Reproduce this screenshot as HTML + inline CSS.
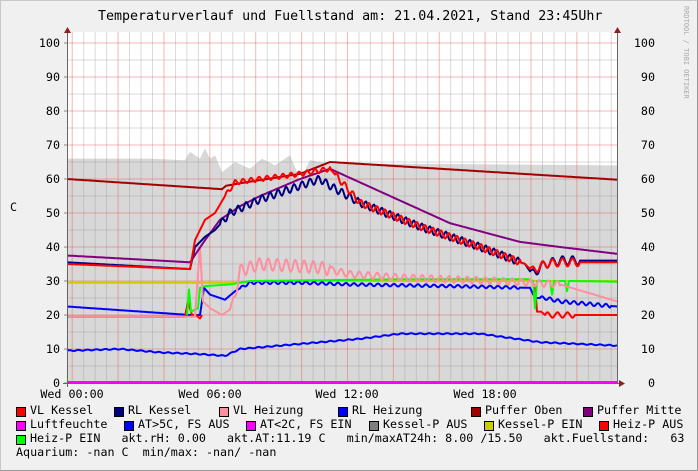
<!DOCTYPE html>
<html><head><meta charset="utf-8"><style>
html,body{margin:0;padding:0;}
body{width:698px;height:471px;background:#f0f0f0;position:relative;overflow:hidden;font-family:"DejaVu Sans Mono","Liberation Mono",monospace;color:#000;}
.frame{position:absolute;left:0;top:0;width:696px;height:469px;border:1px solid #c8c8c8;border-right-color:#999;border-bottom-color:#999;}
.t{position:absolute;white-space:pre;font-size:11.7px;line-height:13px;}
.b{position:absolute;width:8px;height:8px;border:1px solid #000;}
</style></head><body>
<div class="frame"></div>
<svg id="g" width="698" height="471" style="position:absolute;left:0;top:0"></svg>
<div class="t" style="left:98px;top:9px;font-size:13.3px;line-height:16px">Temperaturverlauf und Fuellstand am: 21.04.2021, Stand 23:45Uhr</div>
<div class="t" style="left:10px;top:201px;">C</div>
<div style="position:absolute;left:682px;top:6px;writing-mode:vertical-rl;font-size:7px;color:#aaa;font-family:'DejaVu Sans Mono',monospace;white-space:pre">RRDTOOL / TOBI OETIKER</div>
<div id="leg"></div>
<script>
var s=document.getElementById('g'),h='';
var X0=67,X1=617,Y0=383,K=3.4;
function Y(v){return Y0-K*v;}
h+='<rect x="'+X0+'" y="32" width="'+(X1-X0)+'" height="351" fill="#fff"/>';
var ga=[[67,66],[150,66],[185,65.5],[190,68],[200,66],[205,69],[210,66],[215,67],[222,62],[235,65],[250,63],[262,66],[275,64],[290,67],[300,60],[310,65.5],[330,64.5],[400,64.5],[617,64]];
var pa='M'+X0+','+Y0;ga.forEach(function(p){pa+=' L'+p[0]+','+Y(p[1]);});pa+=' L'+X1+','+Y0+'Z';
h+='<path d="'+pa+'" fill="#d8d8d8"/>';
for(var i=0;i<=48;i++){var x=72.2+i*11.47;if(x>X1)break;var red=(i%4==0);
h+='<line x1="'+x+'" y1="32" x2="'+x+'" y2="'+Y0+'" stroke="'+(red?'rgba(230,90,90,0.45)':'rgba(150,150,150,0.35)')+'" stroke-width="1"/>';}
for(var v=5;v<=100;v+=5){var y=Y(v);h+='<line x1="'+X0+'" y1="'+y+'" x2="'+X1+'" y2="'+y+'" stroke="'+(v%10==0?'rgba(230,90,90,0.45)':'rgba(150,150,150,0.35)')+'" stroke-width="1"/>';
}
for(var v=0;v<=100;v+=10){var y=Y(v);
h+='<text x="60" y="'+(y+4)+'" text-anchor="end" font-size="11.7" font-family="DejaVu Sans Mono,monospace">'+v+'</text>';
h+='<text x="655" y="'+(y+4)+'" text-anchor="end" font-size="11.7" font-family="DejaVu Sans Mono,monospace">'+v+'</text>';
h+='<line x1="64" y1="'+y+'" x2="67" y2="'+y+'" stroke="#888"/>';}
function interp(pts,x){for(var i=0;i<pts.length-1;i++){if(x>=pts[i][0]&&x<=pts[i+1][0]){var t=(x-pts[i][0])/(pts[i+1][0]-pts[i][0]||1);return pts[i][1]+t*(pts[i+1][1]-pts[i][1]);}}return pts[pts.length-1][1];}
function line(pts,col,w,osc){var a=pts[0][0],b=pts[pts.length-1][0],d='';
for(var x=a;x<=b;x+=1){var v=interp(pts,x);if(osc){osc.forEach(function(o){if(x>=o[0]&&x<=o[1])v+=o[2]*Math.sin((x-o[0])/o[3]*2*Math.PI);});}
d+=(d?' L':'M')+x+','+Y(v).toFixed(1);}
h+='<path d="'+d+'" fill="none" stroke="'+col+'" stroke-width="'+w+'" stroke-linejoin="round"/>';}
line([[67,60],[222,57],[226,58],[245,59],[300,61.5],[330,65],[617,59.8]],'#a00000',2);
line([[67,9.5],[120,10],[160,9],[200,8.5],[225,8],[240,10],[260,10.5],[320,12],[360,13],[400,14.5],[480,14.5],[540,12],[617,11]],'#0000ff',2,[[67,617,0.15,9]]);
line([[67,29.5],[240,29.5],[260,30],[617,30]],'#cccc00',2);
line([[67,22.5],[190,20],[200,20],[204,28],[210,26],[225,24.5],[235,27],[250,29.5],[300,29.5],[350,29],[450,28.5],[530,28],[535,25],[545,25],[560,24],[617,22.5]],'#0000ff',2,[[240,520,0.4,8],[540,610,0.5,8]]);
line([[67,19.5],[185,19.5],[188,24],[192,20],[196,20],[200,19],[202,20]],'#ff0000',2);
line([[535,29],[537,21],[541,21],[545,20],[617,20]],'#ff0000',2,[[545,575,0.8,10]]);
line([[187,20],[189,27.5],[191,21],[198,22],[200,28],[205,28.5],[230,29],[250,30],[400,30.5],[530,30.5],[533,30],[535,22],[537,30],[550,30],[552,26],[554,30],[565,30],[567,27],[569,30],[617,29.8]],'#00ff00',2);
line([[67,19.5],[195,19.5],[198,32],[200,40],[203,24],[210,22],[222,20],[232,22],[240,33],[260,35],[320,34],[350,32],[400,31],[500,30],[560,29],[617,24]],'#ff8fa0',2,[[230,330,1.8,9],[330,560,1.0,9]]);
line([[67,37.5],[190,35.5],[205,42],[220,48],[240,52],[260,55],[300,60],[330,63],[390,55],[450,47],[520,41.5],[560,40],[617,38]],'#800080',2);
line([[67,35.5],[190,33.5],[195,40],[205,43],[215,45],[230,50],[260,54],[300,58],[320,60],[330,58],[360,53],[420,46],[480,40],[525,35],[532,32],[545,35],[560,36],[617,36]],'#000080',2,[[220,520,1.1,8],[530,580,1.3,10]]);
line([[67,35],[190,33.5],[195,42],[205,48],[215,50],[225,55],[235,59],[260,60],[300,61.5],[330,63],[360,53],[420,46],[480,40],[525,35],[532,33],[545,35],[560,35.5],[617,35.5]],'#ff0000',2,[[225,330,0.7,8],[335,520,1.0,8],[530,580,1.2,10]]);
h+='<line x1="'+X0+'" y1="382" x2="'+X1+'" y2="382" stroke="#ff00ff" stroke-width="2"/>';
h+='<line x1="67.5" y1="31" x2="67.5" y2="387" stroke="#666"/>';
h+='<line x1="63" y1="383.5" x2="620" y2="383.5" stroke="#666"/>';
h+='<line x1="617.5" y1="31" x2="617.5" y2="383" stroke="#666"/>';
h+='<polygon points="64,33 71,33 67.5,27" fill="#902020"/><polygon points="614,33 621,33 617.5,27" fill="#902020"/>';
h+='<polygon points="619,380 619,387 625,383.5" fill="#902020"/>';
[[72,'Wed 00:00'],[210,'Wed 06:00'],[347,'Wed 12:00'],[485,'Wed 18:00']].forEach(function(t){
h+='<text x="'+t[0]+'" y="398" text-anchor="middle" font-size="11.7" font-family="DejaVu Sans Mono,monospace">'+t[1]+'</text>';});
s.innerHTML=h;
var L=[[16,406,'#ff0000','VL Kessel'],[114,406,'#000080','RL Kessel'],[219,406,'#ff8fa0','VL Heizung'],[338,406,'#0000ff','RL Heizung'],[471,406,'#a00000','Puffer Oben'],[583,406,'#800080','Puffer Mitte'],
[16,420,'#ff00ff','Luftfeuchte'],[124,420,'#0000ff','AT>5C, FS AUS'],[246,420,'#ff00ff','AT<2C, FS EIN'],[369,420,'#808080','Kessel-P AUS'],[484,420,'#cccc00','Kessel-P EIN'],[599,420,'#ff0000','Heiz-P AUS'],
[16,434,'#00ff00','']];
var lh='';L.forEach(function(l){lh+='<div class="b" style="left:'+l[0]+'px;top:'+(l[1]+1)+'px;background:'+l[2]+'"></div>';if(l[3])lh+='<div class="t" style="left:'+(l[0]+14)+'px;top:'+(l[1]-2)+'px">'+l[3].replace('<','&lt;').replace('>','&gt;')+'</div>';});
lh+='<div class="t" style="left:30px;top:432px">Heiz-P EIN   akt.rH: 0.00   akt.AT:11.19 C   min/maxAT24h: 8.00 /15.50   akt.Fuellstand:   63</div>';
lh+='<div class="t" style="left:16px;top:446px">Aquarium: -nan C  min/max: -nan/ -nan</div>';
document.getElementById('leg').innerHTML=lh;
</script>
</body></html>
